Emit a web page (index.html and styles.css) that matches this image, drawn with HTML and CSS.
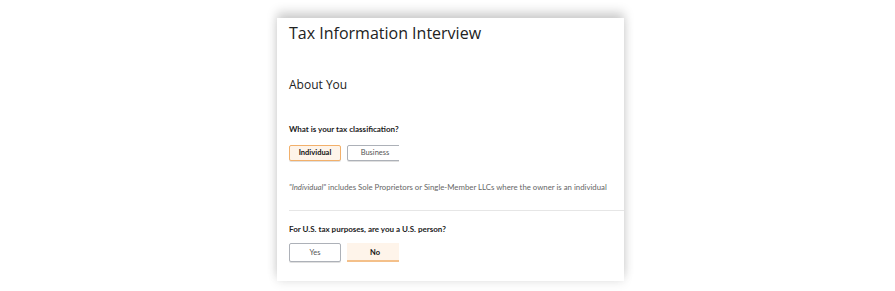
FILE: index.html
```html
<!DOCTYPE html>
<html>
<head>
<meta charset="utf-8" />
<title>Tax Information Interview</title>
<link rel="stylesheet" href="styles.css">
</head>
<body>
    <div class="card">
        <h1 class="title">Tax Information Interview</h1>
        <h2 class="section">About You</h2>
        <div class="question">
            <p class="label">What is your tax classification?</p>
            <div class="choices">
                <a class="choice selected">Individual</a><a class="choice">Business</a>
            </div>
            <p class="note"><i>"Individual"</i> includes Sole Proprietors or Single-Member LLCs where the owner is an individual</p>
        </div>
        <div class="question second">
            <p class="label">For U.S. tax purposes, are you a U.S. person?</p>
            <div class="choices tall">
                <a class="choice">Yes</a><a class="choice selected flat">No</a>
            </div>
        </div>
    </div>
</body>
</html>
```

FILE: styles.css
```css
html, body {
    margin: 0;
    background: #fff;
}
body {
    width: 895px;
    height: 291px;
    overflow: hidden;
    font-family: Lato, "Open Sans", "Liberation Sans", sans-serif;
    color: #111;
}
.card {
    margin: 18px 0 0 277px;
    width: 347px;
    height: 263px;
    background: #fff;
    box-shadow: 0 -6px 10px rgba(0,0,0,0.18), 0 2px 10px rgba(0,0,0,0.08);
    padding: 0 0 0 12px;
    box-sizing: border-box;
    overflow: hidden;
}
.title {
    margin: 0;
    padding-top: 3px;
    font-family: "Open Sans", sans-serif;
    font-size: 16px;
    font-weight: 400;
    line-height: 24px;
    color: #222;
}
.section {
    margin: 31px 0 0;
    font-family: "Open Sans", sans-serif;
    font-size: 12px;
    font-weight: 400;
    line-height: 18px;
    color: #222;
}
.question {
    margin-top: 29px;
}
.label {
    margin: 0;
    font-size: 8px;
    font-weight: 700;
    line-height: 12px;
    color: #222;
}
.choices {
    margin-top: 10px;
    width: 110px;
    height: 17px;
    overflow: hidden;
    display: flex;
    gap: 6px;
}
.choices.tall {
    margin-top: 8px;
    height: 20px;
}
.choice {
    flex: none;
    width: 52px;
    height: 16px;
    box-sizing: border-box;
    border: 1px solid #adb1b8;
    border-radius: 2px;
    box-shadow: 0 1px 0 rgba(0,0,0,0.12);
    font-size: 7.5px;
    line-height: 14px;
    text-align: center;
    color: #555;
    background: #fff;
}
.choice + .choice {
    width: 56px;
}
.choice.selected {
    border-color: #f2b06b;
    background: #fef4ea;
    color: #111;
    font-weight: 700;
}
.tall .choice {
    height: 19px;
    line-height: 17px;
}
.tall .choice.flat {
    border-width: 0 0 2px 0;
    border-color: #f4c08a;
    box-shadow: none;
    border-radius: 0;
    line-height: 19px;
}
.note {
    margin: 20px 0 0;
    font-size: 7.8px;
    line-height: 10px;
    color: #666;
}
.second {
    margin: 18px 0 0 0;
    border-top: 1px solid #e6e6e6;
    padding-top: 12px;
}
```
